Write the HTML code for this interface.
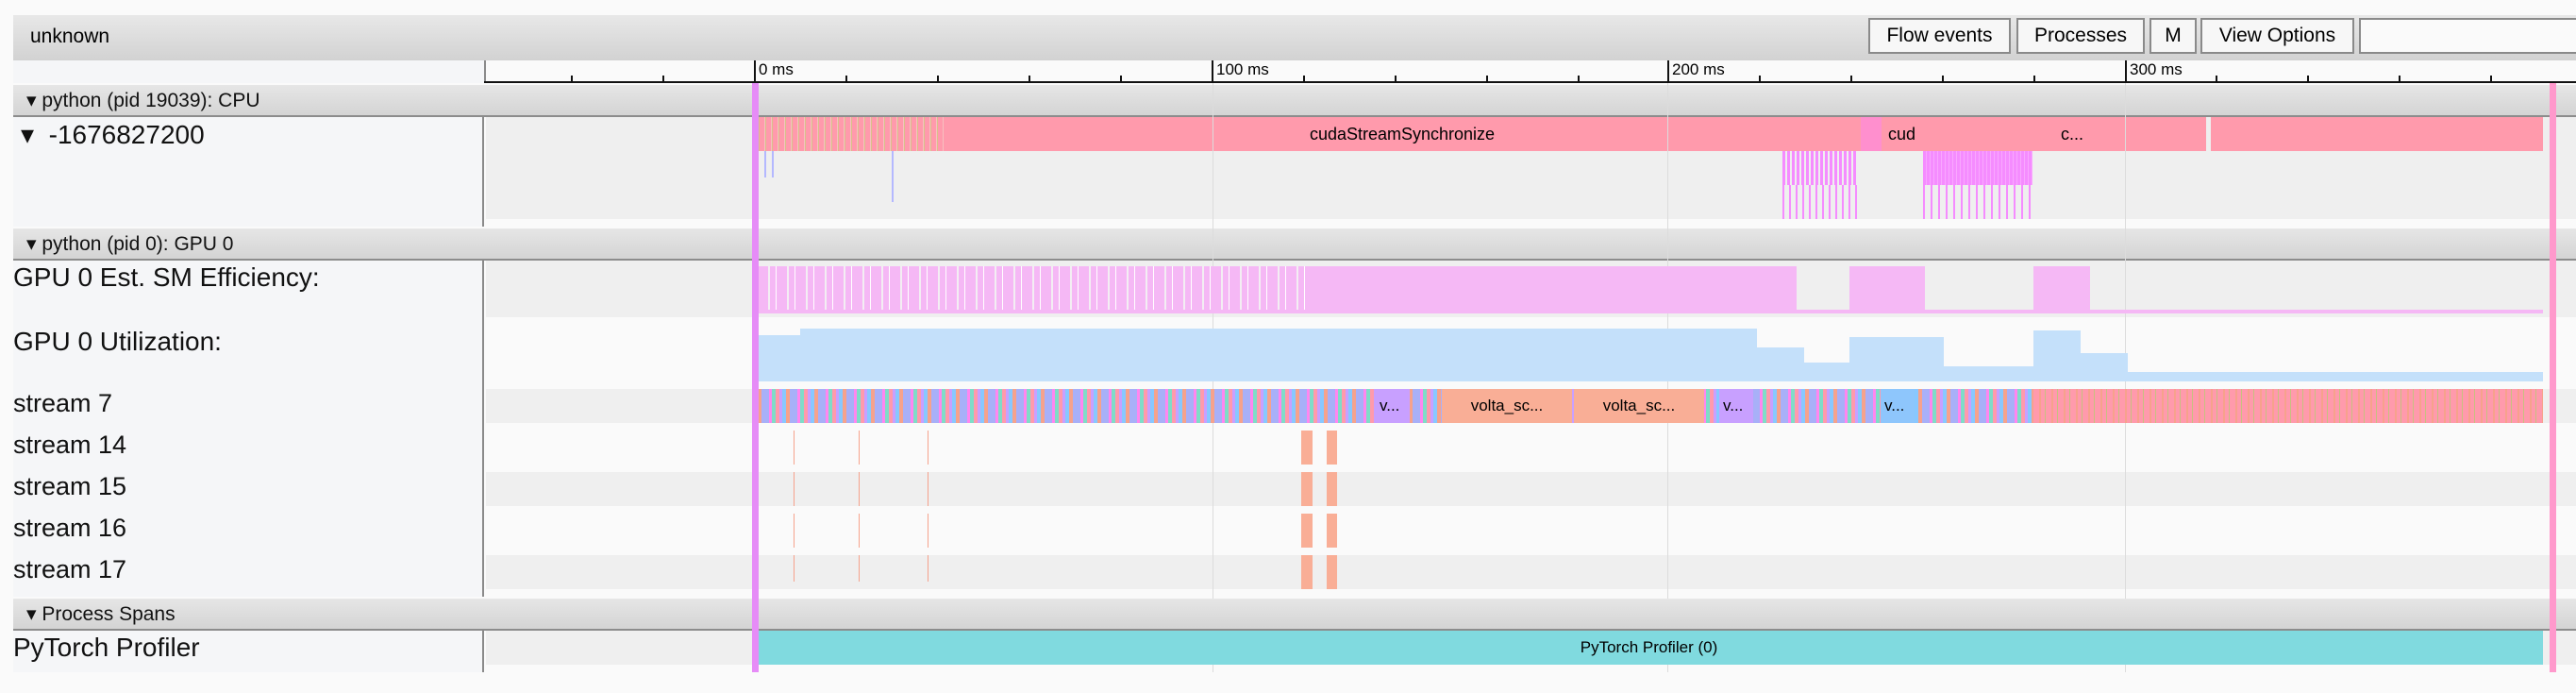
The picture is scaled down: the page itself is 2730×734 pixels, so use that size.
<!DOCTYPE html>
<html><head><style>
body{margin:0;width:2730px;height:734px;background:#fafafa;position:relative;overflow:hidden;font-family:"Liberation Sans",sans-serif;}
div{position:absolute;box-sizing:border-box;}
.hdr{left:14px;width:2716px;background:linear-gradient(#e6e6e6,#d4d4d4);border-bottom:2px solid #8c8c8c;font-size:21px;color:#111;}
.hdr span{position:absolute;left:14px;top:4px;}
.lp{left:14px;width:499px;background:#f5f6f8;border-right:2px solid #8a8a8a;}
.lbl{left:14px;font-size:28px;color:#111;white-space:nowrap;}
.btn{top:19px;height:38px;border:2px solid #8a8a8a;background:#f7f7f7;font-size:21px;text-align:center;line-height:34px;}
.g{background:#efefef;}
.vl{width:1px;background:#dcdcdc;}
.tk{width:2px;background:#111;top:80px;height:8px;}
.tl{font-size:17px;top:64px;}
</style></head><body>
<div style="left:14px;top:16px;width:2716px;height:48px;background:linear-gradient(#e8e8e8,#d2d2d2);"><span style="position:absolute;left:18px;top:11px;font-size:21px;">unknown</span></div>
<div class="btn" style="left:1980px;width:151px;">Flow events</div>
<div class="btn" style="left:2137px;width:136px;">Processes</div>
<div class="btn" style="left:2278px;width:50px;">M</div>
<div class="btn" style="left:2332px;width:163px;">View Options</div>
<div class="btn" style="left:2500px;width:240px;background:#fafafa;"></div>
<div style="left:14px;top:64px;width:499px;height:24px;background:#f5f6f8;"></div>
<div style="left:513px;top:64px;width:2px;height:24px;background:#8a8a8a;"></div>
<div style="left:513px;top:86px;width:2217px;height:2px;background:#111;"></div>
<div class="tk" style="left:605px"></div><div class="tk" style="left:702px"></div>
<div class="tk" style="left:799px;top:64px;height:24px"></div><div class="tl" style="left:804px">0 ms</div>
<div class="tk" style="left:896px"></div><div class="tk" style="left:993px"></div><div class="tk" style="left:1090px"></div><div class="tk" style="left:1187px"></div>
<div class="tk" style="left:1284px;top:64px;height:24px"></div><div class="tl" style="left:1289px">100 ms</div>
<div class="tk" style="left:1381px"></div><div class="tk" style="left:1478px"></div><div class="tk" style="left:1575px"></div><div class="tk" style="left:1672px"></div>
<div class="tk" style="left:1767px;top:64px;height:24px"></div><div class="tl" style="left:1772px">200 ms</div>
<div class="tk" style="left:1961px"></div><div class="tk" style="left:2058px"></div><div class="tk" style="left:2155px"></div><div class="tk" style="left:1864px"></div>
<div class="tk" style="left:2252px;top:64px;height:24px"></div><div class="tl" style="left:2257px">300 ms</div>
<div class="tk" style="left:2348px"></div><div class="tk" style="left:2445px"></div><div class="tk" style="left:2542px"></div><div class="tk" style="left:2639px"></div>

<div class="hdr" style="top:90px;height:34px;"><span>▾ python (pid 19039): CPU</span></div>
<div class="lp" style="top:124px;height:116px;"></div>
<div class="lbl" style="top:126px;left:22px;">▾&nbsp; -1676827200</div>
<div class="g" style="left:515px;top:124px;width:2215px;height:108px;"></div>
<div style="left:800px;top:124px;width:200px;height:36px;background:repeating-linear-gradient(90deg,#ff9aac 0 3px,#f7c0c0 3px 4px,#d8c08a 4px 5px,#ff9aac 5px 7px);"></div>
<div style="left:1000px;top:124px;width:972px;height:36px;background:#ff9aac;text-align:center;font-size:18px;line-height:36px;">cudaStreamSynchronize</div>
<div style="left:1972px;top:124px;width:366px;height:36px;background:#ff9aac;font-size:18px;line-height:36px;"><span style="position:absolute;left:29px">cud</span><span style="position:absolute;left:212px">c...</span></div>
<div style="left:1972px;top:124px;width:22px;height:36px;background:#ff8fce;"></div>
<div style="left:2343px;top:124px;width:352px;height:36px;background:#ff9aac;"></div>
<div style="left:1889px;top:160px;width:80px;height:36px;background:repeating-linear-gradient(90deg,#f58cff 0 3px,#efefef 3px 5px);"></div>
<div style="left:1889px;top:196px;width:80px;height:36px;background:repeating-linear-gradient(90deg,#f58cff 0 2px,#efefef 2px 7px);"></div>
<div style="left:2038px;top:160px;width:116px;height:36px;background:repeating-linear-gradient(90deg,#f58cff 0 3px,#f9a8ff 3px 4px);"></div>
<div style="left:2038px;top:196px;width:116px;height:36px;background:repeating-linear-gradient(90deg,#f58cff 0 2px,#efefef 2px 8px);"></div>
<div style="left:810px;top:160px;width:2px;height:28px;background:#b4b8ff"></div>
<div style="left:818px;top:160px;width:2px;height:28px;background:#b4b8ff"></div>
<div style="left:945px;top:160px;width:2px;height:54px;background:#b4b8ff"></div>

<div class="hdr" style="top:242px;height:34px;"><span>▾ python (pid 0): GPU 0</span></div>
<div class="lp" style="top:276px;height:356px;"></div>
<div class="lbl" style="top:278px;">GPU 0 Est. SM Efficiency:</div>
<div class="lbl" style="top:346px;">GPU 0 Utilization:</div>
<div class="lbl" style="top:412px;font-size:27px;">stream 7</div>
<div class="lbl" style="top:456px;font-size:27px;">stream 14</div>
<div class="lbl" style="top:500px;font-size:27px;">stream 15</div>
<div class="lbl" style="top:544px;font-size:27px;">stream 16</div>
<div class="lbl" style="top:588px;font-size:27px;">stream 17</div>
<div class="g" style="left:515px;top:276px;width:2215px;height:60px;"></div>
<div class="g" style="left:515px;top:412px;width:2215px;height:36px;"></div>
<div class="g" style="left:515px;top:500px;width:2215px;height:36px;"></div>
<div class="g" style="left:515px;top:588px;width:2215px;height:36px;"></div>
<div class="vl" style="left:1285px;top:88px;height:624px"></div>
<div class="vl" style="left:1767px;top:88px;height:624px"></div>
<div class="vl" style="left:2252px;top:88px;height:624px"></div>
<div style="left:803px;top:282px;width:1087px;height:50px;background:repeating-linear-gradient(90deg,#f5b8f5 0 11px,#f3eef3 11px 13px,#f5b8f5 13px 19px,#fff 19px 20px);"></div>
<div style="left:1390px;top:282px;width:500px;height:50px;background:#f5b8f5;"></div>
<div style="left:1890px;top:282px;width:14px;height:50px;background:#f5b8f5;"></div>
<div style="left:1960px;top:282px;width:80px;height:50px;background:#f5b8f5;"></div>
<div style="left:2155px;top:282px;width:60px;height:50px;background:#f5b8f5;"></div>
<div style="left:803px;top:328px;width:1892px;height:4px;background:#f5b8f5;"></div>
<div style="left:803px;top:355px;width:45px;height:49px;background:#c4e0fa;"></div>
<div style="left:848px;top:348px;width:1014px;height:56px;background:#c4e0fa;"></div>
<div style="left:1862px;top:368px;width:50px;height:36px;background:#c4e0fa;"></div>
<div style="left:1912px;top:384px;width:48px;height:20px;background:#c4e0fa;"></div>
<div style="left:1960px;top:357px;width:100px;height:47px;background:#c4e0fa;"></div>
<div style="left:2060px;top:388px;width:95px;height:16px;background:#c4e0fa;"></div>
<div style="left:2155px;top:350px;width:50px;height:54px;background:#c4e0fa;"></div>
<div style="left:2205px;top:374px;width:50px;height:30px;background:#c4e0fa;"></div>
<div style="left:2255px;top:394px;width:440px;height:10px;background:#c4e0fa;"></div>
<div style="left:803px;top:412px;width:1352px;height:36px;background:repeating-linear-gradient(90deg,#f6a28c 0 4px,#a8b0f8 4px 12px,#ff86f0 12px 15px,#7fdcc8 15px 19px,#ff9aac 19px 23px,#c8a0ff 23px 26px,#88c8ff 26px 30px);"></div>
<div style="left:1458px;top:412px;width:36px;height:36px;background:#c8a0ff;font-size:17px;line-height:36px;padding-left:4px;">v...</div>
<div style="left:1528px;top:412px;width:138px;height:36px;background:#f9ae96;font-size:17px;line-height:36px;text-align:center;">volta_sc...</div>
<div style="left:1668px;top:412px;width:138px;height:36px;background:#f9ae96;font-size:17px;line-height:36px;text-align:center;">volta_sc...</div>
<div style="left:1822px;top:412px;width:36px;height:36px;background:#c8a0ff;font-size:17px;line-height:36px;padding-left:4px;">v...</div>
<div style="left:1993px;top:412px;width:36px;height:36px;background:#8ec6fc;font-size:17px;line-height:36px;padding-left:4px;">v...</div>
<div style="left:2155px;top:412px;width:540px;height:36px;background:repeating-linear-gradient(90deg,#ff9aac 0 6px,#f6a28c 6px 8px,#ff9aac 8px 12px,#c8c080 12px 13px);"></div>
<div style="left:841px;top:456px;width:1px;height:160px;background:repeating-linear-gradient(#f6a28c 0 36px,transparent 36px 44px);"></div>
<div style="left:910px;top:456px;width:1px;height:160px;background:repeating-linear-gradient(#f6a28c 0 36px,transparent 36px 44px);"></div>
<div style="left:983px;top:456px;width:1px;height:160px;background:repeating-linear-gradient(#f6a28c 0 36px,transparent 36px 44px);"></div>
<div style="left:1379px;top:456px;width:12px;height:168px;background:repeating-linear-gradient(#f9ae96 0 36px,transparent 36px 44px);"></div>
<div style="left:1406px;top:456px;width:11px;height:168px;background:repeating-linear-gradient(#f9ae96 0 36px,transparent 36px 44px);"></div>

<div class="hdr" style="top:634px;height:34px;"><span>▾ Process Spans</span></div>
<div class="lp" style="top:668px;height:44px;"></div>
<div class="lbl" style="top:670px;">PyTorch Profiler</div>
<div class="g" style="left:515px;top:668px;width:2215px;height:36px;"></div>
<div style="left:800px;top:668px;width:1895px;height:36px;background:#80dadf;text-align:center;font-size:17px;line-height:36px;">PyTorch Profiler (0)</div>
<div style="left:797px;top:88px;width:7px;height:624px;background:#e68cf7;"></div>
<div style="left:2702px;top:88px;width:7px;height:624px;background:#ff99cc;"></div>
</body></html>
